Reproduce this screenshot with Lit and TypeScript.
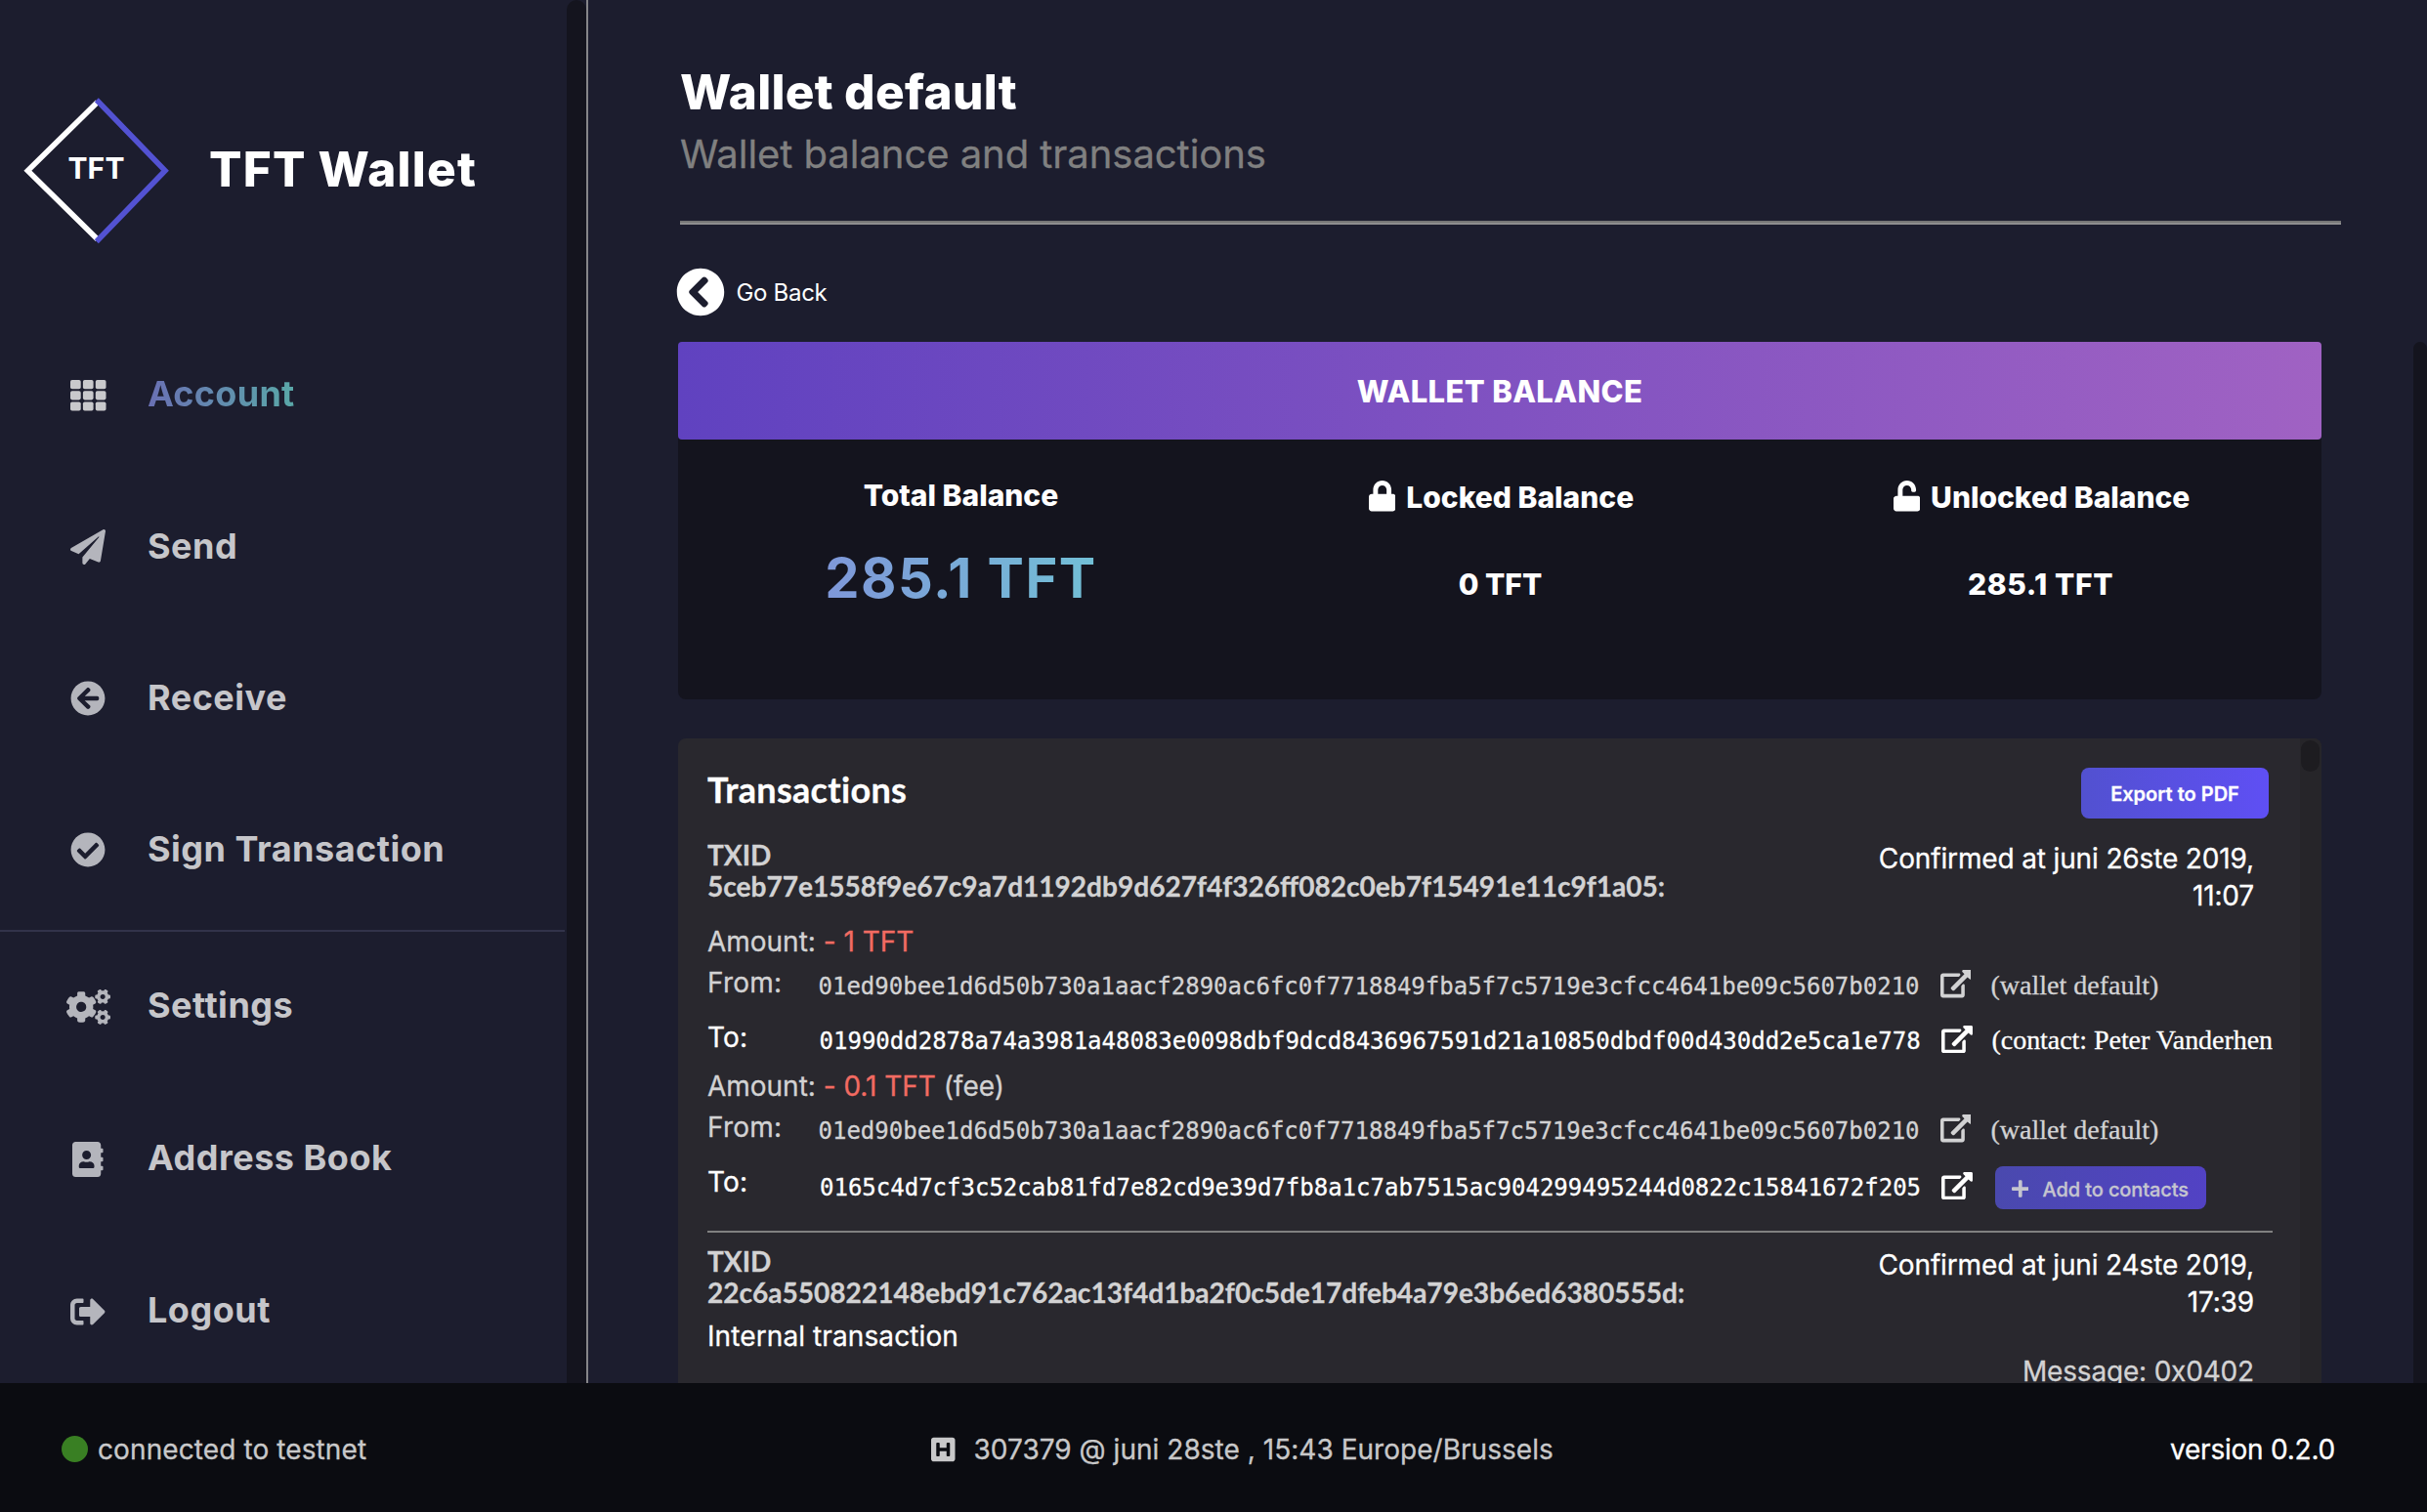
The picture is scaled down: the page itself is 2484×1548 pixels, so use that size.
import { LitElement, html, svg, css, nothing } from "lit";
import { customElement, property } from "lit/decorators.js";

interface Glyph {
  w: number;
  h: number;
  d: string;
}

const GLYPHS: Record<string, Glyph> = {
  send: {
    w: 512,
    h: 512,
    d: "M476 3.2L12.5 270.6c-18.1 10.4-15.8 35.6 2.2 43.2L121 358.4l287.3-253.2c5.5-4.9 13.3 2.6 8.6 8.3L176 407v80.5c0 23.6 28.5 32.9 42.5 15.8L282 426l124.6 52.2c14.2 6 30.4-2.9 33-18.2l72-432C515 7.8 493.3-6.8 476 3.2z",
  },
  receive: {
    w: 512,
    h: 512,
    d: "M256 504C119 504 8 393 8 256S119 8 256 8s248 111 248 248-111 248-248 248zm28.9-143.6L209.4 288H392c13.3 0 24-10.7 24-24v-16c0-13.3-10.7-24-24-24H209.4l75.5-72.4c9.7-9.3 9.9-24.8.4-34.3l-11-10.9c-9.4-9.4-24.6-9.4-33.9 0L107.7 239c-9.4 9.4-9.4 24.6 0 33.9l132.7 132.7c9.4 9.4 24.6 9.4 33.9 0l11-10.9c9.5-9.5 9.3-25-.4-34.3z",
  },
  check: {
    w: 512,
    h: 512,
    d: "M504 256c0 136.967-111.033 248-248 248S8 392.967 8 256 119.033 8 256 8s248 111.033 248 248zM227.314 387.314l184-184c6.248-6.248 6.248-16.379 0-22.627l-22.627-22.627c-6.248-6.249-16.379-6.249-22.628 0L216 308.118l-70.059-70.059c-6.248-6.248-16.379-6.248-22.628 0l-22.627 22.627c-6.248 6.248-6.248 16.379 0 22.627l104 104c6.249 6.249 16.379 6.249 22.628.001z",
  },
  cogs: {
    w: 640,
    h: 512,
    d: "M512.1 191l-8.2 14.3c-3 5.3-9.4 7.5-15.1 5.4-11.8-4.4-22.6-10.7-32.1-18.6-4.6-3.8-5.8-10.5-2.8-15.7l8.2-14.3c-6.9-8-12.3-17.3-15.9-27.4h-16.5c-6 0-11.2-4.3-12.2-10.3-2-12-2.1-24.6 0-37.1 1-6 6.2-10.4 12.2-10.4h16.5c3.6-10.1 9-19.4 15.9-27.4l-8.2-14.3c-3-5.2-1.9-11.9 2.8-15.7 9.5-7.9 20.4-14.2 32.1-18.6 5.7-2.1 12.1.1 15.1 5.4l8.2 14.3c10.5-1.9 21.2-1.9 31.7 0L552 6.3c3-5.3 9.4-7.5 15.1-5.4 11.8 4.4 22.6 10.7 32.1 18.6 4.6 3.8 5.8 10.5 2.8 15.7l-8.2 14.3c6.9 8 12.3 17.3 15.9 27.4h16.5c6 0 11.2 4.3 12.2 10.3 2 12 2.1 24.6 0 37.1-1 6-6.2 10.4-12.2 10.4h-16.5c-3.6 10.1-9 19.4-15.9 27.4l8.2 14.3c3 5.2 1.9 11.9-2.8 15.7-9.5 7.9-20.4 14.2-32.1 18.6-5.7 2.1-12.1-.1-15.1-5.4l-8.2-14.3c-10.4 1.9-21.2 1.9-31.7 0zm-10.5-58.8c38.5 29.6 82.4-14.3 52.8-52.8-38.5-29.7-82.4 14.3-52.8 52.8zM386.3 286.1l33.7 16.8c10.1 5.8 14.5 18.1 10.5 29.1-8.9 24.2-26.4 46.4-42.6 65.8-7.4 8.9-20.2 11.1-30.3 5.3l-29.1-16.8c-16 13.7-34.6 24.6-54.9 31.7v33.6c0 11.6-8.3 21.6-19.7 23.6-24.6 4.2-50.4 4.4-75.9 0-11.5-2-20-11.9-20-23.6V418c-20.3-7.2-38.9-18-54.9-31.7L74 403c-10 5.8-22.9 3.6-30.3-5.3-16.2-19.4-33.3-41.6-42.2-65.7-4-10.9.4-23.2 10.5-29.1l33.3-16.8c-3.9-20.9-3.9-42.4 0-63.4L12 205.8c-10.1-5.8-14.6-18.1-10.5-29 8.9-24.2 26-46.4 42.2-65.8 7.4-8.9 20.2-11.1 30.3-5.3l29.1 16.8c16-13.7 34.6-24.6 54.9-31.7V57.1c0-11.5 8.2-21.5 19.6-23.5 24.6-4.2 50.5-4.4 76-.1 11.5 2 20 11.9 20 23.6v33.6c20.3 7.2 38.9 18 54.9 31.7l29.1-16.8c10-5.8 22.9-3.6 30.3 5.3 16.2 19.4 33.2 41.6 42.1 65.8 4 10.9.1 23.2-10 29.1l-33.7 16.8c3.9 21 3.9 42.5 0 63.5zm-117.6 21.1c59.2-77-28.7-164.9-105.7-105.7-59.2 77 28.7 164.9 105.7 105.7zm243.4 182.7l-8.2 14.3c-3 5.3-9.4 7.5-15.1 5.4-11.8-4.4-22.6-10.7-32.1-18.6-4.6-3.8-5.8-10.5-2.8-15.7l8.2-14.3c-6.9-8-12.3-17.3-15.9-27.4h-16.5c-6 0-11.2-4.3-12.2-10.3-2-12-2.1-24.6 0-37.1 1-6 6.2-10.4 12.2-10.4h16.5c3.6-10.1 9-19.4 15.9-27.4l-8.2-14.3c-3-5.2-1.9-11.9 2.8-15.7 9.5-7.9 20.4-14.2 32.1-18.6 5.7-2.1 12.1.1 15.1 5.4l8.2 14.3c10.5-1.9 21.2-1.9 31.7 0l8.2-14.3c3-5.3 9.4-7.5 15.1-5.4 11.8 4.4 22.6 10.7 32.1 18.6 4.6 3.8 5.8 10.5 2.8 15.7l-8.2 14.3c6.9 8 12.3 17.3 15.9 27.4h16.5c6 0 11.2 4.3 12.2 10.3 2 12 2.1 24.6 0 37.1-1 6-6.2 10.4-12.2 10.4h-16.5c-3.6 10.1-9 19.4-15.9 27.4l8.2 14.3c3 5.2 1.9 11.9-2.8 15.7-9.5 7.9-20.4 14.2-32.1 18.6-5.7 2.1-12.1-.1-15.1-5.4l-8.2-14.3c-10.4 1.9-21.2 1.9-31.7 0zM501.6 431c38.5 29.6 82.4-14.3 52.8-52.8-38.5-29.6-82.4 14.3-52.8 52.8z",
  },
  book: {
    w: 448,
    h: 512,
    d: "M436 160c6.6 0 12-5.4 12-12v-40c0-6.6-5.4-12-12-12h-20V48c0-26.5-21.5-48-48-48H48C21.5 0 0 21.5 0 48v416c0 26.5 21.5 48 48 48h320c26.5 0 48-21.5 48-48v-48h20c6.6 0 12-5.4 12-12v-40c0-6.6-5.4-12-12-12h-20v-64h20c6.6 0 12-5.4 12-12v-40c0-6.6-5.4-12-12-12h-20v-64h20zm-228-32c35.3 0 64 28.7 64 64s-28.7 64-64 64-64-28.7-64-64 28.7-64 64-64zm112 236.8c0 10.6-10 19.2-22.4 19.2H118.4C106 384 96 375.4 96 364.8v-19.2c0-31.8 30.1-57.6 67.2-57.6h5c12.3 5.1 25.7 8 39.8 8s27.6-2.9 39.8-8h5c37.1 0 67.2 25.8 67.2 57.6v19.2z",
  },
  logout: {
    w: 512,
    h: 512,
    d: "M497 273L329 441c-15 15-41 4.5-41-17v-96H152c-13.3 0-24-10.7-24-24v-96c0-13.3 10.7-24 24-24h136V88c0-21.4 25.9-32 41-17l168 168c9.3 9.4 9.3 24.6 0 34zM192 436v-40c0-6.6-5.4-12-12-12H96c-17.7 0-32-14.3-32-32V160c0-17.7 14.3-32 32-32h84c6.6 0 12-5.4 12-12V76c0-6.6-5.4-12-12-12H96c-53 0-96 43-96 96v192c0 53 43 96 96 96h84c6.6 0 12-5.4 12-12z",
  },
  back: {
    w: 512,
    h: 512,
    d: "M256 504C119 504 8 393 8 256S119 8 256 8s248 111 248 248-111 248-248 248zM142.1 273l135.5 135.5c9.4 9.4 24.6 9.4 33.9 0l17-17c9.4-9.4 9.4-24.6 0-33.9L226.9 256l101.6-101.6c9.4-9.4 9.4-24.6 0-33.9l-17-17c-9.4-9.4-24.6-9.4-33.9 0L142.1 239c-9.4 9.4-9.4 24.6 0 34z",
  },
  lock: {
    w: 448,
    h: 512,
    d: "M400 224h-24v-72C376 68.2 307.8 0 224 0S72 68.2 72 152v72H48c-26.5 0-48 21.5-48 48v192c0 26.5 21.5 48 48 48h352c26.5 0 48-21.5 48-48V272c0-26.5-21.5-48-48-48zm-104 0H152v-72c0-39.7 32.3-72 72-72s72 32.3 72 72v72z",
  },
  unlock: {
    w: 448,
    h: 512,
    d: "M400 256H152V152.9c0-39.6 31.7-72.5 71.3-72.9 40-.4 72.7 32.1 72.7 72v16c0 13.3 10.7 24 24 24h32c13.3 0 24-10.7 24-24v-16C376 68 307.5-.3 223.5 0 139.5.3 72 69.5 72 153.5V256H48c-26.5 0-48 21.5-48 48v160c0 26.5 21.5 48 48 48h352c26.5 0 48-21.5 48-48V304c0-26.5-21.5-48-48-48z",
  },
  external: {
    w: 576,
    h: 512,
    d: "M576 24v127.984c0 21.461-25.96 31.98-40.971 16.971l-35.707-35.709-243.523 243.523c-9.373 9.373-24.568 9.373-33.941 0l-22.627-22.627c-9.373-9.373-9.373-24.569 0-33.941L442.756 76.676l-35.703-35.705C391.982 25.9 402.656 0 424.024 0H552c13.255 0 24 10.745 24 24zM407.029 270.794l-16 16A23.999 23.999 0 0 0 384 303.765V448H64V128h264a24.003 24.003 0 0 0 16.97-7.029l16-16C376.089 89.851 365.381 64 344 64H48C21.49 64 0 85.49 0 112v352c0 26.51 21.49 48 48 48h352c26.51 0 48-21.49 48-48V287.764c0-21.382-25.852-32.09-40.971-16.97z",
  },
  plus: {
    w: 448,
    h: 512,
    d: "M416 208H272V64c0-17.67-14.33-32-32-32h-32c-17.67 0-32 14.33-32 32v144H32c-17.67 0-32 14.33-32 32v32c0 17.67 14.33 32 32 32h144v144c0 17.67 14.33 32 32 32h32c17.67 0 32-14.33 32-32V304h144c17.67 0 32-14.33 32-32v-32c0-17.67-14.33-32-32-32z",
  },
  block: {
    w: 448,
    h: 512,
    d: "M448 80v352c0 26.51-21.49 48-48 48H48c-26.51 0-48-21.49-48-48V80c0-26.51 21.49-48 48-48h352c26.51 0 48 21.49 48 48zm-112 48h-32c-8.837 0-16 7.163-16 16v80H160v-80c0-8.837-7.163-16-16-16h-32c-8.837 0-16 7.163-16 16v224c0 8.837 7.163 16 16 16h32c8.837 0 16-7.163 16-16v-80h128v80c0 8.837 7.163 16 16 16h32c8.837 0 16-7.163 16-16V144c0-8.837-7.163-16-16-16z",
  },
};

@customElement("ui-icon")
export class UiIcon extends LitElement {
  @property() name = "";
  @property({ type: Number }) size = 36;

  static styles = css`
    :host {
      display: flex;
      flex: none;
    }
    .glyph {
      display: block;
      fill: currentColor;
    }
  `;

  render() {
    if (this.name === "grid") {
      const cells = [0, 1, 2].flatMap((r) => [0, 1, 2].map((c) => [c * 12.9, r * 11.2]));
      return html`<svg class="glyph" width="37" height="32" viewBox="0 0 37 32">
        ${cells.map(([x, y]) => svg`<rect x=${x} y=${y} width="10.7" height="9.2" rx="1.8" />`)}
      </svg>`;
    }
    const g = GLYPHS[this.name];
    if (!g) return nothing;
    return html`<svg
      class="glyph"
      width=${(this.size * g.w) / g.h}
      height=${this.size}
      viewBox="0 0 ${g.w} ${g.h}"
    >
      <path d=${g.d} />
    </svg>`;
  }
}

interface NavEntry {
  icon: string;
  label: string;
  active?: boolean;
}

const PRIMARY: NavEntry[] = [
  { icon: "grid", label: "Account", active: true },
  { icon: "send", label: "Send" },
  { icon: "receive", label: "Receive" },
  { icon: "check", label: "Sign Transaction" },
];

const SECONDARY: NavEntry[] = [
  { icon: "cogs", label: "Settings" },
  { icon: "book", label: "Address Book" },
  { icon: "logout", label: "Logout" },
];

@customElement("side-nav")
export class SideNav extends LitElement {
  static styles = css`
    :host {
      display: flex;
      flex: none;
      width: 600px;
      border-right: 2px solid #858589;
      font-family: Inter, "Liberation Sans", sans-serif;
    }
    .menu {
      width: 580px;
    }
    .track {
      width: 20px;
      background: #14141e;
      border-radius: 10px 10px 0 0;
    }
    .brand {
      display: flex;
      align-items: flex-start;
      height: 225px;
      padding: 100px 0 0 24px;
    }
    .logo {
      display: block;
      flex: none;
    }
    .logo-text {
      font: 700 30px Inter, sans-serif;
      letter-spacing: 0.2px;
      fill: #fff;
    }
    .brand-name {
      margin: 43px 0 0 40px;
      color: #fff;
      font-size: 49.5px;
      font-weight: 800;
      line-height: 60px;
      letter-spacing: 1.2px;
      white-space: nowrap;
    }
    .item {
      display: flex;
      align-items: center;
      height: 156px;
      padding-left: 67px;
      color: #c6c6ca;
    }
    .primary .item {
      height: 155px;
    }
    .primary .item:first-child {
      height: 156px;
    }
    .icon {
      display: flex;
      justify-content: center;
      width: 46px;
      margin-top: 3px;
      color: #b4b5bc;
    }
    .icon.bright {
      color: #c9c9cc;
    }
    .label {
      margin-left: 38px;
      font-size: 36px;
      font-weight: 700;
      line-height: 44px;
      letter-spacing: 0.5px;
      white-space: nowrap;
    }
    .label.active {
      letter-spacing: 0.3px;
      color: transparent;
      background: linear-gradient(90deg, #6a70b4, #5aa8a8);
      background-clip: text;
      -webkit-background-clip: text;
    }
    .divider {
      width: 578px;
      height: 2px;
      margin: 6px 0 -3px;
      background: #32334a;
    }
  `;

  private item(e: NavEntry) {
    return html`<div class="item">
      <span class="icon ${e.active ? "bright" : ""}"><ui-icon name=${e.icon}></ui-icon></span>
      <span class="label ${e.active ? "active" : ""}">${e.label}</span>
    </div>`;
  }

  render() {
    return html`
      <nav class="menu">
        <div class="brand">
          <svg class="logo" width="150" height="150" viewBox="0 0 150 150" fill="none" stroke-width="5.6">
            <path d="M75.8 4.6L4.4 74.8L75.8 145" stroke="#fff" />
            <path d="M74.8 2.3L145 74.8L74.8 147.3" stroke="#5352d2" />
            <text class="logo-text" x="45.4" y="83.3">TFT</text>
          </svg>
          <div class="brand-name">TFT Wallet</div>
        </div>
        <div class="primary">${PRIMARY.map((e) => this.item(e))}</div>
        <div class="divider"></div>
        ${SECONDARY.map((e) => this.item(e))}
      </nav>
      <div class="track"></div>
    `;
  }
}

@customElement("balance-card")
export class BalanceCard extends LitElement {
  static styles = css`
    :host {
      display: block;
      height: 366px;
      border-radius: 8px;
      background: #14141e;
      color: #fff;
      font-family: Inter, "Liberation Sans", sans-serif;
      font-weight: 800;
      text-align: center;
      white-space: nowrap;
    }
    .head {
      height: 100px;
      border-radius: 4px;
      background: linear-gradient(90deg, #6042c0, #8052c1 50%, #a062c3);
      font-size: 31px;
      line-height: 101px;
      letter-spacing: 0.35px;
    }
    .cols {
      display: grid;
      grid-template-columns: repeat(3, 553px);
      padding: 38px 0 0 12px;
      font-size: 30px;
      letter-spacing: 0px;
    }
    .label {
      display: flex;
      justify-content: center;
      align-items: center;
      gap: 11px;
      height: 42px;
      padding-left: 2px;
    }
    .label.total {
      height: 38px;
    }
    .icon {
      margin-bottom: 2px;
    }
    .value {
      line-height: 137px;
    }
    .value.unlocked {
      letter-spacing: 0.6px;
    }
    .value.total {
      width: fit-content;
      margin: 0 auto;
      padding-left: 2px;
      font-size: 56px;
      font-weight: 700;
      line-height: 132px;
      letter-spacing: 1.5px;
      color: transparent;
      background: linear-gradient(90deg, #7f97d9, #72c0d6);
      background-clip: text;
      -webkit-background-clip: text;
    }
  `;

  render() {
    return html`
      <div class="head">WALLET BALANCE</div>
      <div class="cols">
        <div>
          <div class="label total">Total Balance</div>
          <div class="value total">285.1 TFT</div>
        </div>
        <div>
          <div class="label"><ui-icon class="icon" name="lock" size="31.4"></ui-icon>Locked Balance</div>
          <div class="value">0 TFT</div>
        </div>
        <div>
          <div class="label"><ui-icon class="icon" name="unlock" size="31.4"></ui-icon>Unlocked Balance</div>
          <div class="value unlocked">285.1 TFT</div>
        </div>
      </div>
    `;
  }
}

interface Transfer {
  amount: string;
  fee?: boolean;
  from: string;
  fromNote: string;
  to: string;
  toNote?: string;
}

interface Transaction {
  id: string;
  confirmed: string;
  transfers: Transfer[];
  internal?: string;
  message?: string;
}

const OWN = "01ed90bee1d6d50b730a1aacf2890ac6fc0f7718849fba5f7c5719e3cfcc4641be09c5607b0210";

const TRANSACTIONS: Transaction[] = [
  {
    id: "5ceb77e1558f9e67c9a7d1192db9d627f4f326ff082c0eb7f15491e11c9f1a05:",
    confirmed: "Confirmed at juni 26ste 2019, 11:07",
    transfers: [
      {
        amount: "- 1 TFT",
        from: OWN,
        fromNote: "(wallet default)",
        to: "01990dd2878a74a3981a48083e0098dbf9dcd8436967591d21a10850dbdf00d430dd2e5ca1e778",
        toNote: "(contact: Peter Vanderhen",
      },
      {
        amount: "- 0.1 TFT",
        fee: true,
        from: OWN,
        fromNote: "(wallet default)",
        to: "0165c4d7cf3c52cab81fd7e82cd9e39d7fb8a1c7ab7515ac904299495244d0822c15841672f205",
      },
    ],
  },
  {
    id: "22c6a550822148ebd91c762ac13f4d1ba2f0c5de17dfeb4a79e3b6ed6380555d:",
    confirmed: "Confirmed at juni 24ste 2019, 17:39",
    transfers: [],
    internal: "Internal transaction",
    message: "Message: 0x0402",
  },
];

@customElement("transaction-list")
export class TransactionList extends LitElement {
  static styles = css`
    :host {
      display: flex;
      height: 660px;
      overflow: hidden;
      border-radius: 8px 8px 0 0;
      background: #29282e;
      color: #d2d2d3;
      font: 28px Inter, "Liberation Sans", sans-serif;
      -webkit-text-stroke: 0.3px currentColor;
      white-space: nowrap;
    }
    .body {
      width: 1602px;
      padding: 30px 28px 0 30px;
    }
    .track {
      width: 22px;
      background: #262529;
    }
    .thumb {
      height: 32px;
      margin: 2px 2px 0 1px;
      border-radius: 10px;
      background: #1d1c20;
    }
    .top {
      display: flex;
      justify-content: space-between;
      height: 52px;
      padding-right: 4px;
    }
    .title {
      color: #fff;
      font: 700 36px/44px Lato, sans-serif;
      letter-spacing: 0.3px;
    }
    .export {
      width: 192px;
      border-radius: 8px;
      background: linear-gradient(90deg, #5251d0, #5f4ff4);
      color: #fff;
      font-size: 20px;
      font-weight: 600;
      line-height: 55px;
      text-align: center;
    }
    .tx {
      padding-top: 21px;
    }
    .tx + .tx {
      padding-top: 13px;
      border-top: 2px solid #808080;
    }
    .tx-head {
      display: flex;
      justify-content: space-between;
      height: 70px;
      padding-right: 19px;
    }
    .id {
      font: 700 28.06px/32px Lato, sans-serif;
    }
    .date {
      width: 400px;
      margin-top: 0.5px;
      color: #fff;
      line-height: 38.3px;
      letter-spacing: -0.14px;
      text-align: right;
      white-space: normal;
    }
    .transfers {
      padding: 16px 0 13px;
    }
    .amount {
      line-height: 38px;
      letter-spacing: -0.02px;
    }
    .neg {
      color: #f26b62;
    }
    .line {
      display: flex;
      height: 56px;
      overflow: hidden;
    }
    .line.to {
      height: 54px;
      color: #fff;
    }
    .line.tall {
      height: 60px;
    }
    .key {
      width: 113.5px;
      line-height: 46px;
      letter-spacing: 0.2px;
    }
    .to .key {
      width: 115px;
      line-height: 47px;
    }
    .mono {
      font: 24px/54px "DejaVu Sans Mono", "Liberation Mono", monospace;
    }
    .link {
      height: 49px;
      margin-left: 21px;
      align-items: center;
    }
    .note {
      margin-left: 20px;
      font: 28px/51px "Liberation Serif", serif;
    }
    .to .note {
      letter-spacing: -0.05px;
      line-height: 52px;
    }
    .to .link {
      height: 50px;
    }
    .tall .mono {
      line-height: 58px;
    }
    .tall .link {
      height: 54px;
    }
    .add {
      display: flex;
      align-items: center;
      gap: 14px;
      box-sizing: border-box;
      width: 216px;
      height: 44px;
      margin: 7px 0 0 23px;
      padding: 1px 0 0 17px;
      border-radius: 8px;
      background: linear-gradient(90deg, #4a49ae, #5242c4);
      color: #c5c5cf;
      font-size: 20px;
      font-weight: 500;
      line-height: 26px;
      letter-spacing: -0.1px;
    }
    .add-text {
      padding-top: 2px;
    }
    .internal {
      padding-top: 3px;
      color: #fff;
      line-height: 40px;
      letter-spacing: 0.1px;
    }
    .message {
      padding-right: 19px;
      line-height: 32px;
      letter-spacing: -0.18px;
      text-align: right;
    }
  `;

  private transfer(t: Transfer) {
    return html`
      <div class="amount">Amount: <span class="neg">${t.amount}</span>${t.fee ? " (fee)" : nothing}</div>
      <div class="line">
        <span class="key">From:</span><span class="mono">${t.from}</span>
        <ui-icon class="link" name="external" size="28.4"></ui-icon>
        <span class="note">${t.fromNote}</span>
      </div>
      <div class="line to ${t.toNote ? "" : "tall"}">
        <span class="key">To:</span><span class="mono">${t.to}</span>
        <ui-icon class="link" name="external" size="28.4"></ui-icon>
        ${t.toNote
          ? html`<span class="note">${t.toNote}</span>`
          : html`<span class="add"
              ><ui-icon name="plus" size="20"></ui-icon><span class="add-text">Add to contacts</span></span
            >`}
      </div>
    `;
  }

  render() {
    return html`
      <div class="body">
        <div class="top">
          <div class="title">Transactions</div>
          <div class="export">Export to PDF</div>
        </div>
        ${TRANSACTIONS.map(
          (tx) => html`<section class="tx">
            <div class="tx-head">
              <div class="id">TXID<br />${tx.id}</div>
              <div class="date">${tx.confirmed}</div>
            </div>
            ${tx.transfers.length
              ? html`<div class="transfers">${tx.transfers.map((t) => this.transfer(t))}</div>`
              : nothing}
            ${tx.internal ? html`<div class="internal">${tx.internal}</div>` : nothing}
            ${tx.message ? html`<div class="message">${tx.message}</div>` : nothing}
          </section>`,
        )}
      </div>
      <div class="track"><div class="thumb"></div></div>
    `;
  }
}

@customElement("app-root")
export class AppRoot extends LitElement {
  static styles = css`
    :host {
      display: flex;
      flex-direction: column;
      width: 2484px;
      height: 1548px;
      overflow: hidden;
      background: #1c1d2e;
      color: #fff;
      font-family: Inter, "Liberation Sans", sans-serif;
      white-space: nowrap;
    }
    .upper {
      display: flex;
      height: 1416px;
      overflow: hidden;
    }
    .main {
      flex: 1;
      padding: 64px 0 0 92px;
    }
    .heading {
      padding-left: 2px;
      font-size: 49.5px;
      font-weight: 800;
      line-height: 60px;
      letter-spacing: 0.3px;
    }
    .sub {
      margin-top: 9px;
      padding-left: 2px;
      color: #808080;
      font-size: 40px;
      line-height: 49px;
      letter-spacing: -0.05px;
      -webkit-text-stroke: 0.3px currentColor;
    }
    .rule {
      width: 1700px;
      height: 2px;
      margin: 44px 0 0 2px;
      border-top: 2px solid #767676;
      background: #8e8e8e;
    }
    .back {
      display: flex;
      align-items: center;
      gap: 12px;
      height: 50px;
      margin: 44px 0 26px -2.5px;
      font-size: 24px;
      letter-spacing: -0.32px;
    }
    .scroller {
      display: flex;
      justify-content: space-between;
      height: 1066px;
    }
    .content {
      display: flex;
      flex-direction: column;
      gap: 40px;
      width: 1682px;
    }
    .track {
      width: 14px;
      border-radius: 10px 10px 0 0;
      background: #14141e;
    }
    .footer {
      display: grid;
      grid-template-columns: 890px 1fr auto;
      align-items: center;
      height: 132px;
      padding: 3px 94px 0 63px;
      box-sizing: border-box;
      background: #0b0c11;
      font-size: 28px;
      color: #c8c8c9;
      -webkit-text-stroke: 0.3px currentColor;
    }
    .status,
    .height {
      display: flex;
      align-items: center;
    }
    .status {
      gap: 10px;
      letter-spacing: 0.1px;
    }
    .height {
      gap: 19px;
      letter-spacing: 0.03px;
    }
    .dot {
      width: 27px;
      height: 27px;
      border-radius: 50%;
      background: #397f23;
    }
    .version {
      color: #fff;
      letter-spacing: -0.23px;
    }
  `;

  render() {
    return html`
      <div class="upper">
        <side-nav></side-nav>
        <main class="main">
          <div class="heading">Wallet default</div>
          <div class="sub">Wallet balance and transactions</div>
          <div class="rule"></div>
          <div class="back"><ui-icon name="back" size="50"></ui-icon><span>Go Back</span></div>
          <div class="scroller">
            <div class="content">
              <balance-card></balance-card>
              <transaction-list></transaction-list>
            </div>
            <div class="track"></div>
          </div>
        </main>
      </div>
      <footer class="footer">
        <div class="status"><span class="dot"></span>connected to testnet</div>
        <div class="height">
          <ui-icon name="block" size="28"></ui-icon>307379 @ juni 28ste , 15:43 Europe/Brussels
        </div>
        <div class="version">version 0.2.0</div>
      </footer>
    `;
  }
}
